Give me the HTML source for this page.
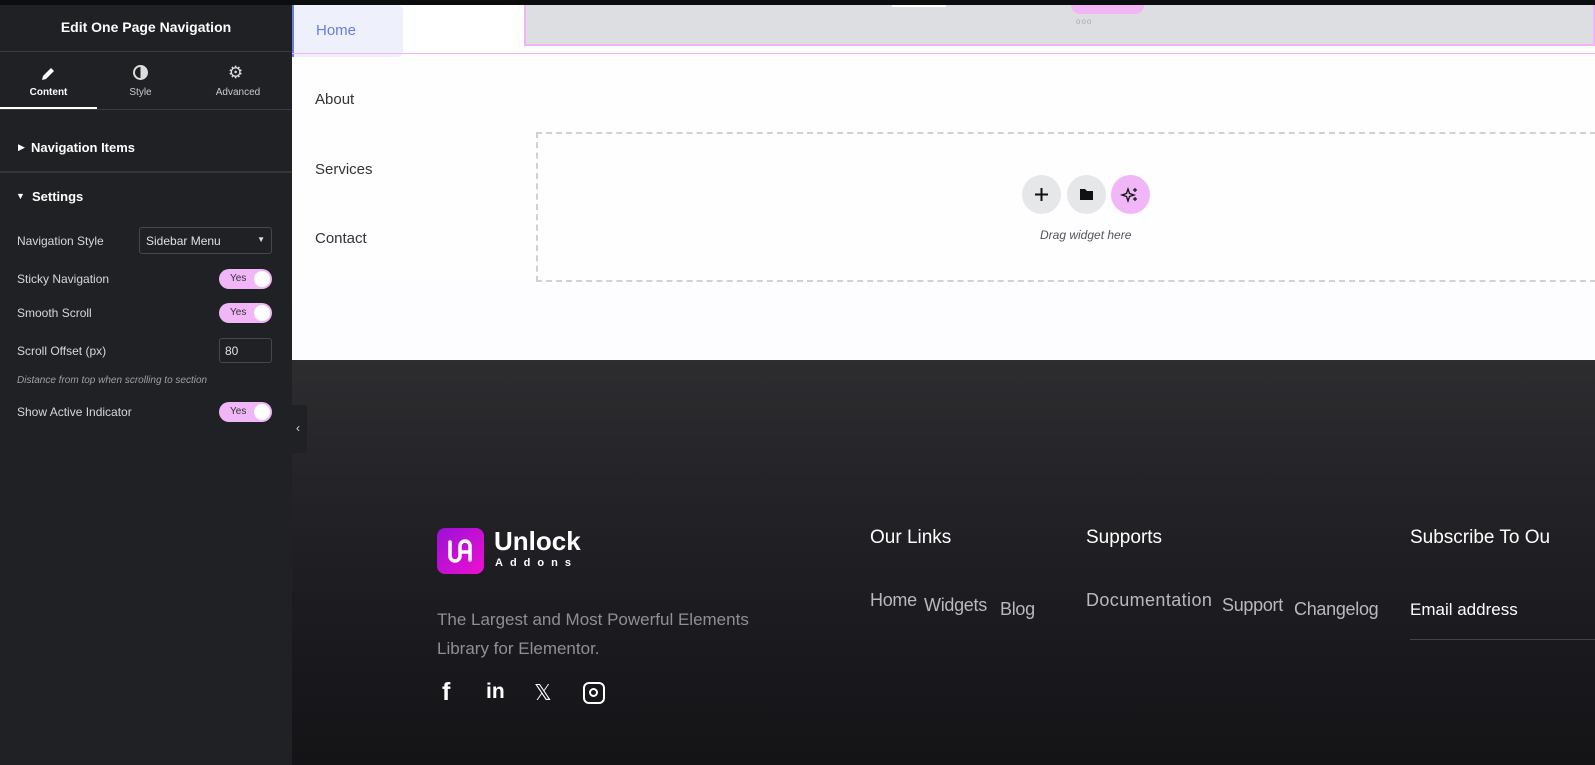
<!DOCTYPE html>
<html><head><meta charset="utf-8"><style>
*{box-sizing:border-box;margin:0;padding:0}
body{width:1595px;height:765px;overflow:hidden;background:#fff;font-family:"Liberation Sans",sans-serif;position:relative}
.abs{position:absolute}
#side{left:0;top:0;width:292px;height:765px;background:#1f2124;color:#e0e1e3}
.lbl{font-size:12px;color:#d5d8dc;position:absolute;left:17px}
.tog{position:absolute;left:219px;width:53px;height:20px;border-radius:10px;background:#f0b6f7;font-size:10px;color:#333}
.tog span{position:absolute;left:11px;top:5px;line-height:10px}
.tog i{position:absolute;right:2px;top:2px;width:16px;height:16px;border-radius:50%;background:#fff}
.nav{position:absolute;left:315px;font-size:15px;color:#333;font-family:"Liberation Sans",sans-serif}
.circ{position:absolute;top:175px;width:39px;height:39px;border-radius:50%;background:#e6e7e9}
.ft{position:absolute;color:#fff;font-size:19px}
.lk{position:absolute;color:#b9b9bd;font-size:18px;letter-spacing:-0.3px}
</style></head><body>
<div class="abs" style="left:0;top:0;width:1595px;height:5px;background:#0c0d0e"></div>
<div id="side" class="abs" style="top:5px;height:760px">
  <div class="abs" style="top:14px;width:292px;text-align:center;font-weight:bold;font-size:14px;color:#fff">Edit One Page Navigation</div>
  <div class="abs" style="top:46px;width:292px;height:1px;background:#3a3c40"></div>
  <svg class="abs" style="left:40px;top:61px" width="16" height="16" viewBox="0 0 16 16"><path d="M2 14l1-4 8-8 3 3-8 8z" fill="#fff"/></svg>
  <div class="abs" style="left:0;width:97px;top:82px;text-align:center;font-size:10px;font-weight:bold;color:#fff">Content</div>
  <div class="abs" style="left:133px;top:60px;width:15px;height:15px;border-radius:50%;border:2px solid #ddd;background:linear-gradient(90deg,transparent 50%,#ddd 50%)"></div>
  <div class="abs" style="left:97px;width:87px;top:82px;text-align:center;font-size:10px;color:#ccc">Style</div>
  <div class="abs" style="left:228px;top:58px;font-size:17px;color:#ddd">⚙</div>
  <div class="abs" style="left:184px;width:108px;top:82px;text-align:center;font-size:10px;color:#ccc">Advanced</div>
  <div class="abs" style="left:0;top:102px;width:97px;height:3px;background:#fff"></div>
  <div class="abs" style="top:104px;width:292px;height:1px;background:#3a3c40"></div>
  <div class="abs" style="left:18px;top:137px;font-size:9px;color:#fff">▶</div>
  <div class="abs" style="left:31px;top:135px;font-size:13px;font-weight:bold;color:#fff">Navigation Items</div>
  <div class="abs" style="top:166px;width:292px;height:2px;background:#34363a"></div>
  <div class="abs" style="left:16px;top:186px;font-size:9px;color:#fff">▼</div>
  <div class="abs" style="left:32px;top:184px;font-size:13px;font-weight:bold;color:#fff">Settings</div>
  <div class="lbl" style="top:229px">Navigation Style</div>
  <div class="abs" style="left:139px;top:222px;width:133px;height:27px;border:1px solid #45474b;border-radius:3px;font-size:12px;color:#e0e0e0;padding:6px 0 0 6px">Sidebar Menu<span style="position:absolute;right:6px;top:7px;font-size:8px">▼</span></div>
  <div class="lbl" style="top:267px">Sticky Navigation</div>
  <div class="tog" style="top:264px"><span>Yes</span><i></i></div>
  <div class="lbl" style="top:301px">Smooth Scroll</div>
  <div class="tog" style="top:298px"><span>Yes</span><i></i></div>
  <div class="lbl" style="top:339px">Scroll Offset (px)</div>
  <div class="abs" style="left:219px;top:333px;width:53px;height:25px;border:1px solid #45474b;border-radius:3px;font-size:12px;color:#e0e0e0;padding:5px 0 0 5px">80</div>
  <div class="abs" style="left:17px;top:370px;font-size:10px;font-style:italic;color:#9da0a5">Distance from top when scrolling to section</div>
  <div class="lbl" style="top:400px">Show Active Indicator</div>
  <div class="tog" style="top:397px"><span>Yes</span><i></i></div>
</div>
<div class="abs" style="left:292px;top:5px;width:1303px;height:355px;background:linear-gradient(180deg,#fff,#fdfcff)"></div>
<div class="abs" style="left:292px;top:5px;width:111px;height:52px;background:#eef0fc;border-left:2px solid #6b7de0;border-radius:0 6px 6px 0"></div>
<div class="abs" style="left:316px;top:22px;font-size:15px;color:#6a7ddf">Home</div>
<div class="abs" style="left:524px;top:5px;width:1071px;height:41px;background:#dddee1;border:2px solid #f2b5f5;border-top:none"></div>
<div class="abs" style="left:1071px;top:5px;width:73px;height:9px;border-radius:0 0 10px 10px;background:#f2b5f5"></div>
<div class="abs" style="left:892px;top:5px;width:54px;height:2px;background:#fff"></div>
<div class="abs" style="left:1076px;top:17px;font-size:8px;color:#aaa;letter-spacing:1px">ooo</div>
<div class="abs" style="left:292px;top:53px;width:1303px;height:1px;background:#f2b5f5"></div>
<div class="nav" style="top:91px">About</div>
<div class="nav" style="top:161px">Services</div>
<div class="nav" style="top:230px">Contact</div>
<div class="abs" style="left:536px;top:132px;width:1070px;height:150px;border:2px dashed #d0d1d4"></div>
<div class="circ" style="left:1022px"><svg width="39" height="39"><path d="M19.5 13v13M13 19.5h13" stroke="#111" stroke-width="2"/></svg></div>
<div class="circ" style="left:1067px"><svg width="39" height="39"><path d="M13 14h5l2 2h6v9H13z" fill="#111"/></svg></div>
<div class="circ" style="left:1111px;background:#f0b6f7"><svg width="39" height="39"><path d="M17 14l1.5 4.5 4.5 1.5-4.5 1.5L17 26l-1.5-4.5L11 20l4.5-1.5z" fill="none" stroke="#111" stroke-width="1.3"/><path d="M24 13v4M22 15h4M24 22v4M22 24h4" stroke="#111" stroke-width="1.2"/></svg></div>
<div class="abs" style="left:1040px;top:228px;font-size:12px;font-style:italic;color:#555">Drag widget here</div>
<div class="abs" style="left:292px;top:360px;width:1303px;height:405px;background:linear-gradient(180deg,#2d2d30,#1e1e23 50%,#141417)"></div>
<div class="abs" style="left:292px;top:405px;width:15px;height:48px;background:#1f2124;color:#ddd;font-size:12px;padding:16px 0 0 4px">‹</div>
<div class="abs" style="left:437px;top:528px;width:47px;height:46px;border-radius:8px;background:linear-gradient(135deg,#9a10d8,#ee10d0)"><svg width="47" height="46"><path d="M13 14v14a5 5 0 0 0 10 0V18a5 5 0 0 1 10 0v14M23 24h10" fill="none" stroke="#fff" stroke-width="3.5" stroke-linecap="round"/></svg></div>
<div class="abs" style="left:494px;top:526px;font-size:26px;font-weight:bold;color:#fff">Unlock</div>
<div class="abs" style="left:495px;top:557px;font-size:11px;font-weight:bold;color:#fff;letter-spacing:7px">Addons</div>
<div class="abs" style="left:437px;top:605px;font-size:17px;line-height:29px;color:#8f8f94">The Largest and Most Powerful Elements<br>Library for Elementor.</div>
<div class="abs" style="left:442px;top:678px;font-size:25px;font-weight:bold;color:#fff">f</div>
<div class="abs" style="left:486px;top:680px;font-size:21px;font-weight:bold;color:#fff">in</div>
<div class="abs" style="left:534px;top:680px;font-size:22px;color:#fff">𝕏</div>
<div class="abs" style="left:583px;top:682px;width:22px;height:22px;border:2.5px solid #fff;border-radius:6px"><div style="position:absolute;left:4px;top:4px;width:9px;height:9px;border:2px solid #fff;border-radius:50%"></div></div>
<div class="ft" style="left:870px;top:527px">Our Links</div>
<div class="ft" style="left:1086px;top:527px">Supports</div>
<div class="ft" style="left:1410px;top:527px;white-space:nowrap">Subscribe To Ou</div>
<div class="lk" style="left:870px;top:590px">Home</div>
<div class="lk" style="left:924px;top:595px">Widgets</div>
<div class="lk" style="left:1000px;top:599px">Blog</div>
<div class="lk" style="left:1086px;top:590px;letter-spacing:0.4px">Documentation</div>
<div class="lk" style="left:1222px;top:595px">Support</div>
<div class="lk" style="left:1294px;top:599px">Changelog</div>
<div class="abs" style="left:1410px;top:600px;font-size:17px;color:#fff">Email address</div>
<div class="abs" style="left:1410px;top:639px;width:185px;height:1px;background:#444"></div>
</body></html>
